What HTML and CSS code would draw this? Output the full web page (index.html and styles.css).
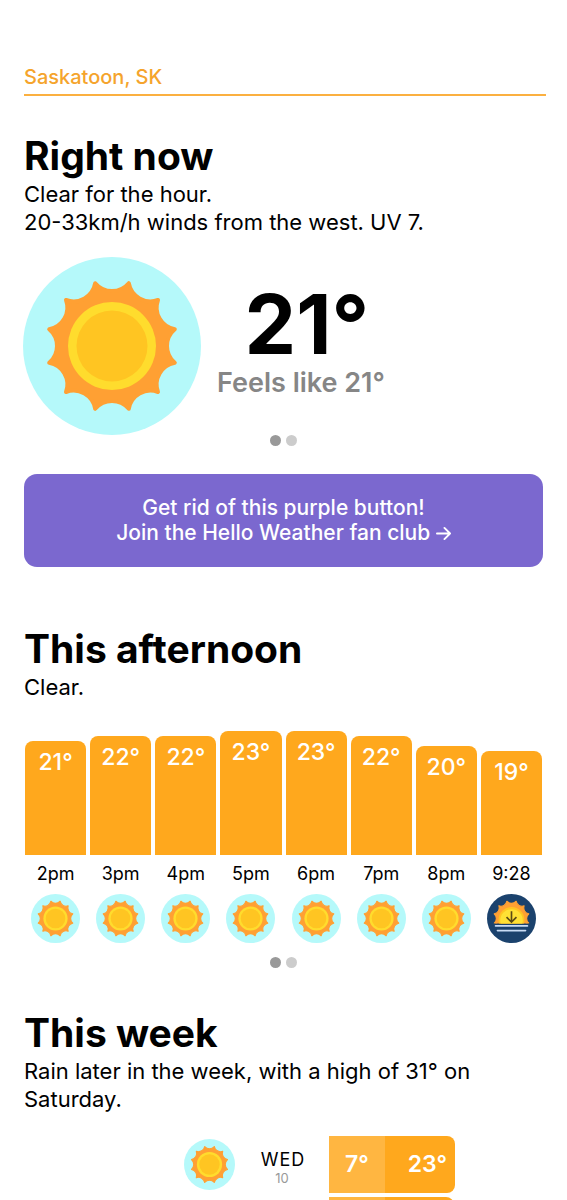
FILE: index.html
```html
<!DOCTYPE html>
<html lang="en">
<head>
<meta charset="utf-8">
<meta name="viewport" content="width=device-width, initial-scale=1">
<title>Weather – Saskatoon, SK</title>
<link rel="stylesheet" href="styles.css">
</head>
<body>
<svg class="sprite" width="0" height="0" aria-hidden="true">
  <defs>
    <path id="rays" d="M105.8 26.2A22 22 0 0 0 135 43A22 22 0 0 0 151.8 72.2A22 22 0 0 0 151.8 105.8A22 22 0 0 0 135 135A22 22 0 0 0 105.8 151.8A22 22 0 0 0 72.2 151.8A22 22 0 0 0 43 135A22 22 0 0 0 26.2 105.8A22 22 0 0 0 26.2 72.2A22 22 0 0 0 43 43A22 22 0 0 0 72.2 26.2A22 22 0 0 0 105.8 26.2Z" fill="#ffa033" stroke="#ffa033" stroke-width="4" stroke-linejoin="round"/>
    <clipPath id="horizon"><rect width="178" height="107"/></clipPath>
    <symbol id="sun" viewBox="0 0 178 178">
      <circle cx="89" cy="89" r="89" fill="#b5f9fa"/>
      <use href="#rays"/>
      <circle cx="89" cy="89" r="44" fill="#ffdc2d"/>
      <circle cx="89" cy="89" r="35.5" fill="#ffc522"/>
    </symbol>
    <symbol id="sunset" viewBox="0 0 178 178">
      <circle cx="89" cy="89" r="89" fill="#1b426d"/>
      <g clip-path="url(#horizon)">
        <use href="#rays"/>
        <circle cx="89" cy="94" r="47" fill="#ffc522"/>
        <circle cx="89" cy="96" r="41" fill="#ffe135"/>
      </g>
      <path d="M89 63v38M71 84l18 18 18-18" fill="none" stroke="#5b4a14" stroke-width="6"/>
      <path d="M31 116h116M38 133h102" fill="none" stroke="#c9dcf5" stroke-width="6" stroke-linecap="round"/>
    </symbol>
  </defs>
</svg>

<main class="app">
  <header class="place">Saskatoon, SK</header>

  <section class="section now">
    <h1 class="title">Right now</h1>
    <p class="summary">Clear for the hour.<br>20-33km/h winds from the west. UV 7.</p>
    <div class="current">
      <svg class="current-icon" role="img" aria-label="Clear"><use href="#sun"/></svg>
      <div class="current-temps">
        <div class="temp">21°</div>
        <div class="feels">Feels like 21°</div>
      </div>
    </div>
    <div class="dots">
      <button class="dot dot-active" type="button" aria-label="Page 1"></button>
      <button class="dot" type="button" aria-label="Page 2"></button>
    </div>
    <button class="promo" type="button">Get rid of this purple button!<br>Join the Hello Weather fan club
      <svg class="arrow" viewBox="0 0 16 16" aria-hidden="true"><path d="M1 8h14M9 2l6 6-6 6"/></svg>
    </button>
  </section>

  <section class="section afternoon">
    <h2 class="title">This afternoon</h2>
    <p class="summary">Clear.</p>
    <ol class="hours">
      <li class="hour"><div class="bar" style="height:114px">21°</div><span class="time">2pm</span><svg class="hour-icon"><use href="#sun"/></svg></li>
      <li class="hour"><div class="bar" style="height:119px">22°</div><span class="time">3pm</span><svg class="hour-icon"><use href="#sun"/></svg></li>
      <li class="hour"><div class="bar" style="height:119px">22°</div><span class="time">4pm</span><svg class="hour-icon"><use href="#sun"/></svg></li>
      <li class="hour"><div class="bar" style="height:124px">23°</div><span class="time">5pm</span><svg class="hour-icon"><use href="#sun"/></svg></li>
      <li class="hour"><div class="bar" style="height:124px">23°</div><span class="time">6pm</span><svg class="hour-icon"><use href="#sun"/></svg></li>
      <li class="hour"><div class="bar" style="height:119px">22°</div><span class="time">7pm</span><svg class="hour-icon"><use href="#sun"/></svg></li>
      <li class="hour"><div class="bar" style="height:109px">20°</div><span class="time">8pm</span><svg class="hour-icon"><use href="#sun"/></svg></li>
      <li class="hour"><div class="bar" style="height:104px">19°</div><span class="time">9:28</span><svg class="hour-icon"><use href="#sunset"/></svg></li>
    </ol>
    <div class="dots">
      <button class="dot dot-active" type="button" aria-label="Page 1"></button>
      <button class="dot" type="button" aria-label="Page 2"></button>
    </div>
  </section>

  <section class="section">
    <h2 class="title">This week</h2>
    <p class="summary">Rain later in the week, with a high of 31° on Saturday.</p>
    <ol class="week">
      <li class="day">
        <svg class="day-icon"><use href="#sun"/></svg>
        <div class="date"><span class="weekday">WED</span><span class="number">10</span></div>
        <div class="range" style="width:126px"><span class="low">7°</span><span class="high">23°</span></div>
      </li>
      <li class="day">
        <div class="range" style="width:125px"><span class="low"></span><span class="high"></span></div>
      </li>
    </ol>
  </section>
</main>
</body>
</html>
```

FILE: styles.css
```css
* {
  box-sizing: border-box;
}

body {
  margin: 0;
  background: #fff;
  color: #000;
  font-family: Inter, "Liberation Sans", sans-serif;
}

.sprite {
  position: absolute;
}

.app {
  height: 100vh;
  overflow: hidden;
  padding: 64px 24px 0;
}

.place {
  margin-right: -3px;
  padding-bottom: 4px;
  border-bottom: 2px solid #fbb040;
  color: #f5a42c;
  font-size: 20px;
  font-weight: 500;
  line-height: 26px;
}

.section {
  display: flex;
  flex-direction: column;
  padding-top: 41px;
}

.now {
  padding-top: 36px;
}

.afternoon {
  padding-top: 58px;
}

.title {
  margin: 0;
  font-size: 39px;
  font-weight: 700;
  line-height: 48px;
}

.summary {
  margin: 0;
  font-size: 22px;
  line-height: 28px;
}

.current {
  display: flex;
  align-items: center;
  gap: 16px;
  margin: 21px 0 0 -1px;
}

.current-icon {
  width: 178px;
  height: 178px;
}

.current-temps {
  padding-bottom: 6px;
  text-align: center;
}

.temp {
  padding-left: 12px;
  font-size: 82px;
  font-weight: 700;
  line-height: 80px;
}

.feels {
  color: #868686;
  font-size: 27px;
  font-weight: 600;
  line-height: 36px;
}

.dots {
  display: flex;
  justify-content: center;
  gap: 5px;
}

.dot {
  width: 11px;
  height: 11px;
  padding: 0;
  border: 0;
  border-radius: 50%;
  background: #ccc;
}

.dot-active {
  background: #999;
}

.promo {
  margin-top: 28px;
  padding: 21px 16px 22px;
  border: 0;
  border-radius: 13px;
  background: #7b68cf;
  color: #fff;
  font: 500 21px/25px Inter, "Liberation Sans", sans-serif;
}

.arrow {
  width: 15px;
  height: 15px;
  vertical-align: -1px;
  fill: none;
  stroke: currentColor;
  stroke-width: 2;
  stroke-linecap: round;
  stroke-linejoin: round;
}

.hours {
  display: grid;
  grid-template-columns: repeat(8, 1fr);
  gap: 4px;
  margin: 30px 0 14px;
  padding: 0 1px;
  list-style: none;
}

.hour {
  display: flex;
  flex-direction: column;
  align-items: center;
  justify-content: flex-end;
}

.bar {
  align-self: stretch;
  padding-top: 6px;
  border-radius: 8px 8px 0 0;
  background: #ffa81d;
  color: #fff;
  font-size: 23px;
  font-weight: 500;
  line-height: 30px;
  text-align: center;
}

.time {
  margin: 7px 0 8px;
  font-size: 18px;
  line-height: 24px;
}

.hour-icon {
  width: 49px;
  height: 49px;
}

.week {
  display: grid;
  gap: 4px;
  margin: 23px 0 0;
  padding: 0;
  list-style: none;
}

.day {
  display: grid;
  grid-template-columns: 211px 94px 1fr;
  align-items: center;
  height: 57px;
}

.day-icon {
  justify-self: end;
  width: 51px;
  height: 51px;
}

.date {
  display: flex;
  flex-direction: column;
  align-items: center;
  padding-top: 7px;
}

.weekday {
  padding-left: 2px;
  font-size: 18px;
  letter-spacing: 1px;
  line-height: 20px;
}

.number {
  color: #999;
  font-size: 13px;
  line-height: 16px;
}

.range {
  display: flex;
  grid-column: 3;
  height: 57px;
  overflow: hidden;
  border-radius: 0 8px 8px 0;
  background: #ffa81d;
  color: #fff;
  font-size: 23px;
  font-weight: 600;
  line-height: 57px;
}

.low {
  width: 56px;
  background: #ffb641;
  text-align: center;
}

.high {
  flex: 1;
  padding-right: 8px;
  text-align: right;
}
```
